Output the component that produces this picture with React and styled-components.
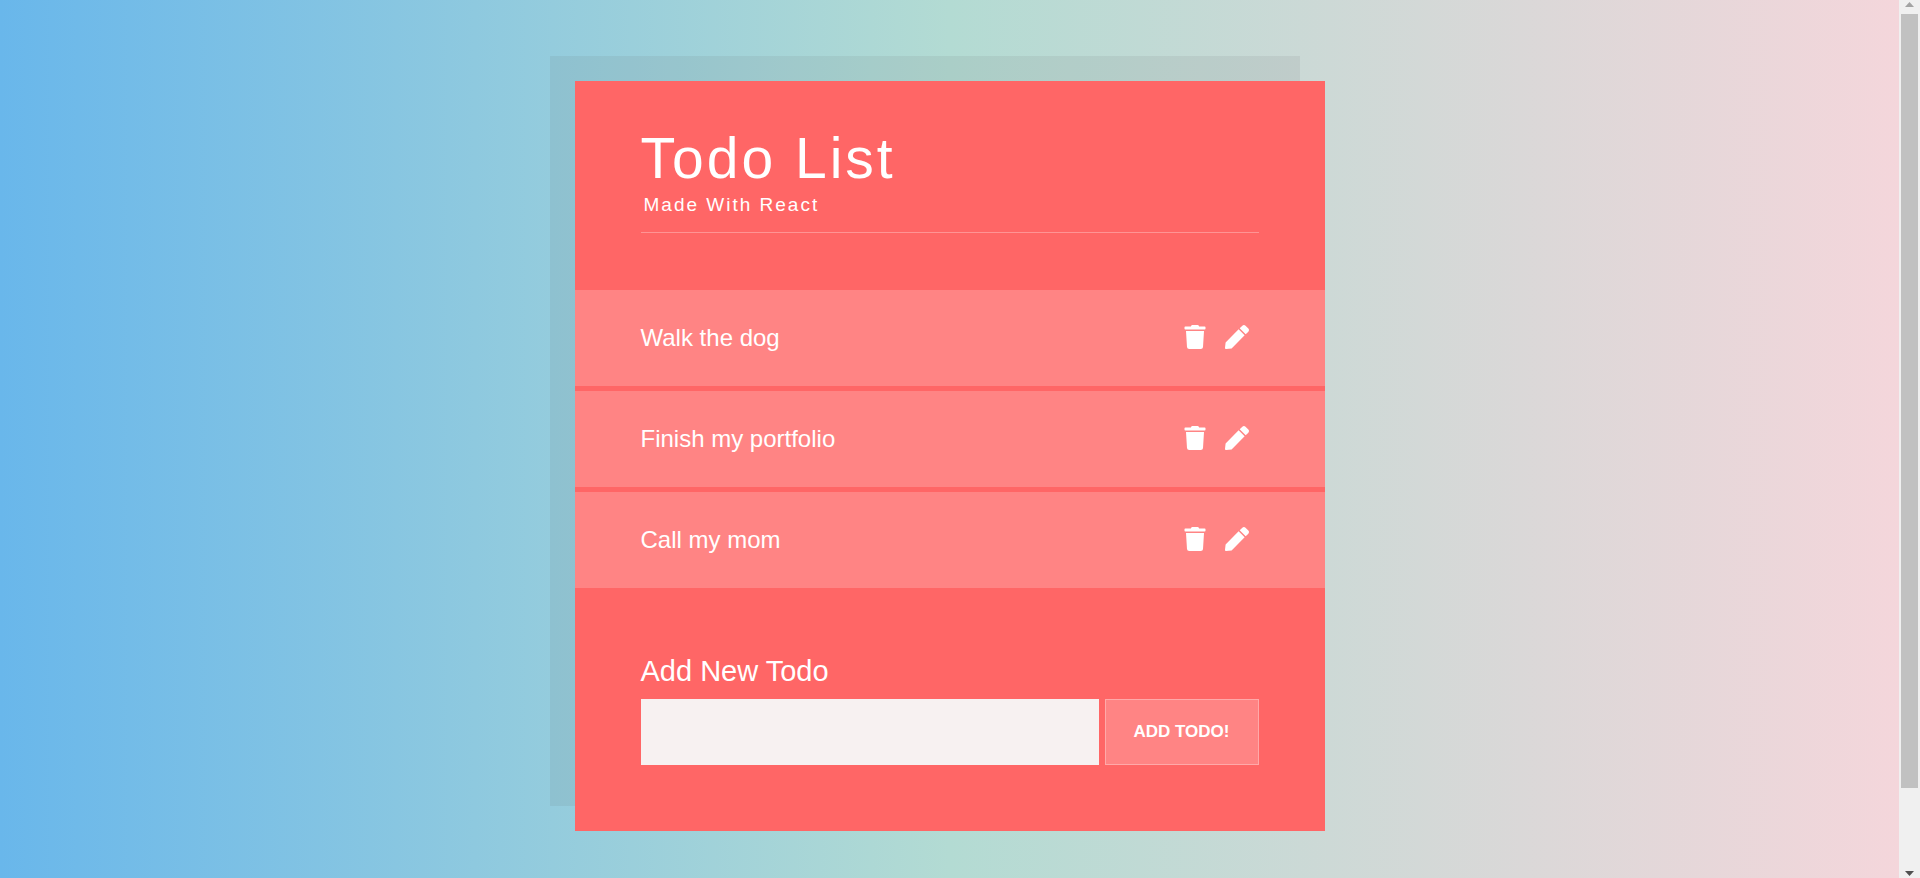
import React, { useState } from "react";
import styled, { createGlobalStyle } from "styled-components";
import { FaTrash, FaPen } from "react-icons/fa";

const GlobalStyle = createGlobalStyle`
  *, *::before, *::after { box-sizing: border-box; }
  body { margin: 0; font-family: "Liberation Sans", Arial, sans-serif; color: #fff; }
  h1, h2, p, ul { margin: 0; padding: 0; font-weight: 400; }
`;

const Window = styled.div`
  display: flex;
  height: 100vh;
  overflow: hidden;
`;

const Page = styled.main`
  flex: 1;
  min-width: 0;
  overflow-y: auto;
  scrollbar-width: none;
  padding: 81px 24px;
  background: linear-gradient(to right, #69b7eb, #b3dbd3, #f4d6db);
`;

const Card = styled.section`
  max-width: 750px;
  margin: 0 auto;
  padding-bottom: 66px;
  background: #ff6666;
  box-shadow: -25px -25px 0 rgba(100, 100, 100, 0.1);
`;

const Header = styled.header`
  margin: 0 66px;
  padding: 43px 0 15px;
  border-bottom: 1px solid rgba(255, 255, 255, 0.3);
`;

const Title = styled.h1`
  font-size: 57px;
  line-height: 68px;
  letter-spacing: 3px;
`;

const Subtitle = styled.p`
  padding-left: 3px;
  font-size: 19px;
  line-height: 25px;
  letter-spacing: 2px;
`;

const List = styled.ul`
  display: grid;
  gap: 5px;
  margin: 57px 0 66px;
  list-style: none;
`;

const Item = styled.li`
  display: flex;
  align-items: center;
  justify-content: space-between;
  min-height: 96px;
  padding: 0 66px;
  background: #ff8484;
  font-size: 24px;
`;

const Actions = styled.div`
  display: flex;
  gap: 18px;
  padding: 0 10px 2px 0;
`;

const IconButton = styled.button`
  display: flex;
  padding: 0;
  border: 0;
  background: none;
  color: inherit;
  font-size: 24px;
  cursor: pointer;
`;

const Form = styled.form`
  padding: 0 66px;
`;

const Label = styled.label`
  display: block;
  margin-bottom: 11px;
  font-size: 29px;
  line-height: 34px;
`;

const Fields = styled.div`
  display: flex;
  gap: 6px;
`;

const TextInput = styled.input`
  flex: 1;
  min-width: 0;
  height: 66px;
  padding: 0 20px;
  border: 0;
  border-radius: 0;
  background: #f7f1f1;
  color: #333;
  font: inherit;
`;

const AddButton = styled.button`
  width: 154px;
  border: 1px solid rgba(255, 255, 255, 0.3);
  background: #ff8484;
  color: #fff;
  font: bold 17px "Liberation Sans", Arial, sans-serif;
  text-transform: uppercase;
  cursor: pointer;
`;

const Scrollbar = styled.div`
  display: flex;
  flex-direction: column;
  width: 21px;
  background: #f0f0f0;
`;

const ArrowBox = styled.svg`
  display: block;
  width: 21px;
  height: 14px;
  fill: ${(p) => p.$color};
`;

const Track = styled.div`
  flex: 1;
  padding: 0 2px;
`;

const Thumb = styled.div`
  height: 91%;
  background: #c1c1c1;
`;

export default function App() {
  const [todos, setTodos] = useState(["Walk the dog", "Finish my portfolio", "Call my mom"]);
  const [draft, setDraft] = useState("");

  const addTodo = (e) => {
    e.preventDefault();
    if (draft.trim()) setTodos([...todos, draft.trim()]);
    setDraft("");
  };

  return (
    <Window>
      <GlobalStyle />
      <Page>
        <Card>
          <Header>
            <Title>Todo List</Title>
            <Subtitle>Made With React</Subtitle>
          </Header>
          <List>
            {todos.map((todo, i) => (
              <Item key={i}>
                {todo}
                <Actions>
                  <IconButton type="button" aria-label={`Delete ${todo}`} onClick={() => setTodos(todos.filter((_, n) => n !== i))}>
                    <FaTrash />
                  </IconButton>
                  <IconButton type="button" aria-label={`Edit ${todo}`}>
                    <FaPen />
                  </IconButton>
                </Actions>
              </Item>
            ))}
          </List>
          <Form onSubmit={addTodo}>
            <Label htmlFor="new-todo">Add New Todo</Label>
            <Fields>
              <TextInput id="new-todo" type="text" value={draft} onChange={(e) => setDraft(e.target.value)} />
              <AddButton>Add Todo!</AddButton>
            </Fields>
          </Form>
        </Card>
      </Page>
      <Scrollbar aria-hidden="true">
        <ArrowBox $color="#a3a3a3" viewBox="0 0 21 14">
          <path d="M6 7 10.5 2 15 7Z" />
        </ArrowBox>
        <Track>
          <Thumb />
        </Track>
        <ArrowBox $color="#505050" viewBox="0 0 21 14">
          <path d="M6 7 10.5 12 15 7Z" />
        </ArrowBox>
      </Scrollbar>
    </Window>
  );
}
